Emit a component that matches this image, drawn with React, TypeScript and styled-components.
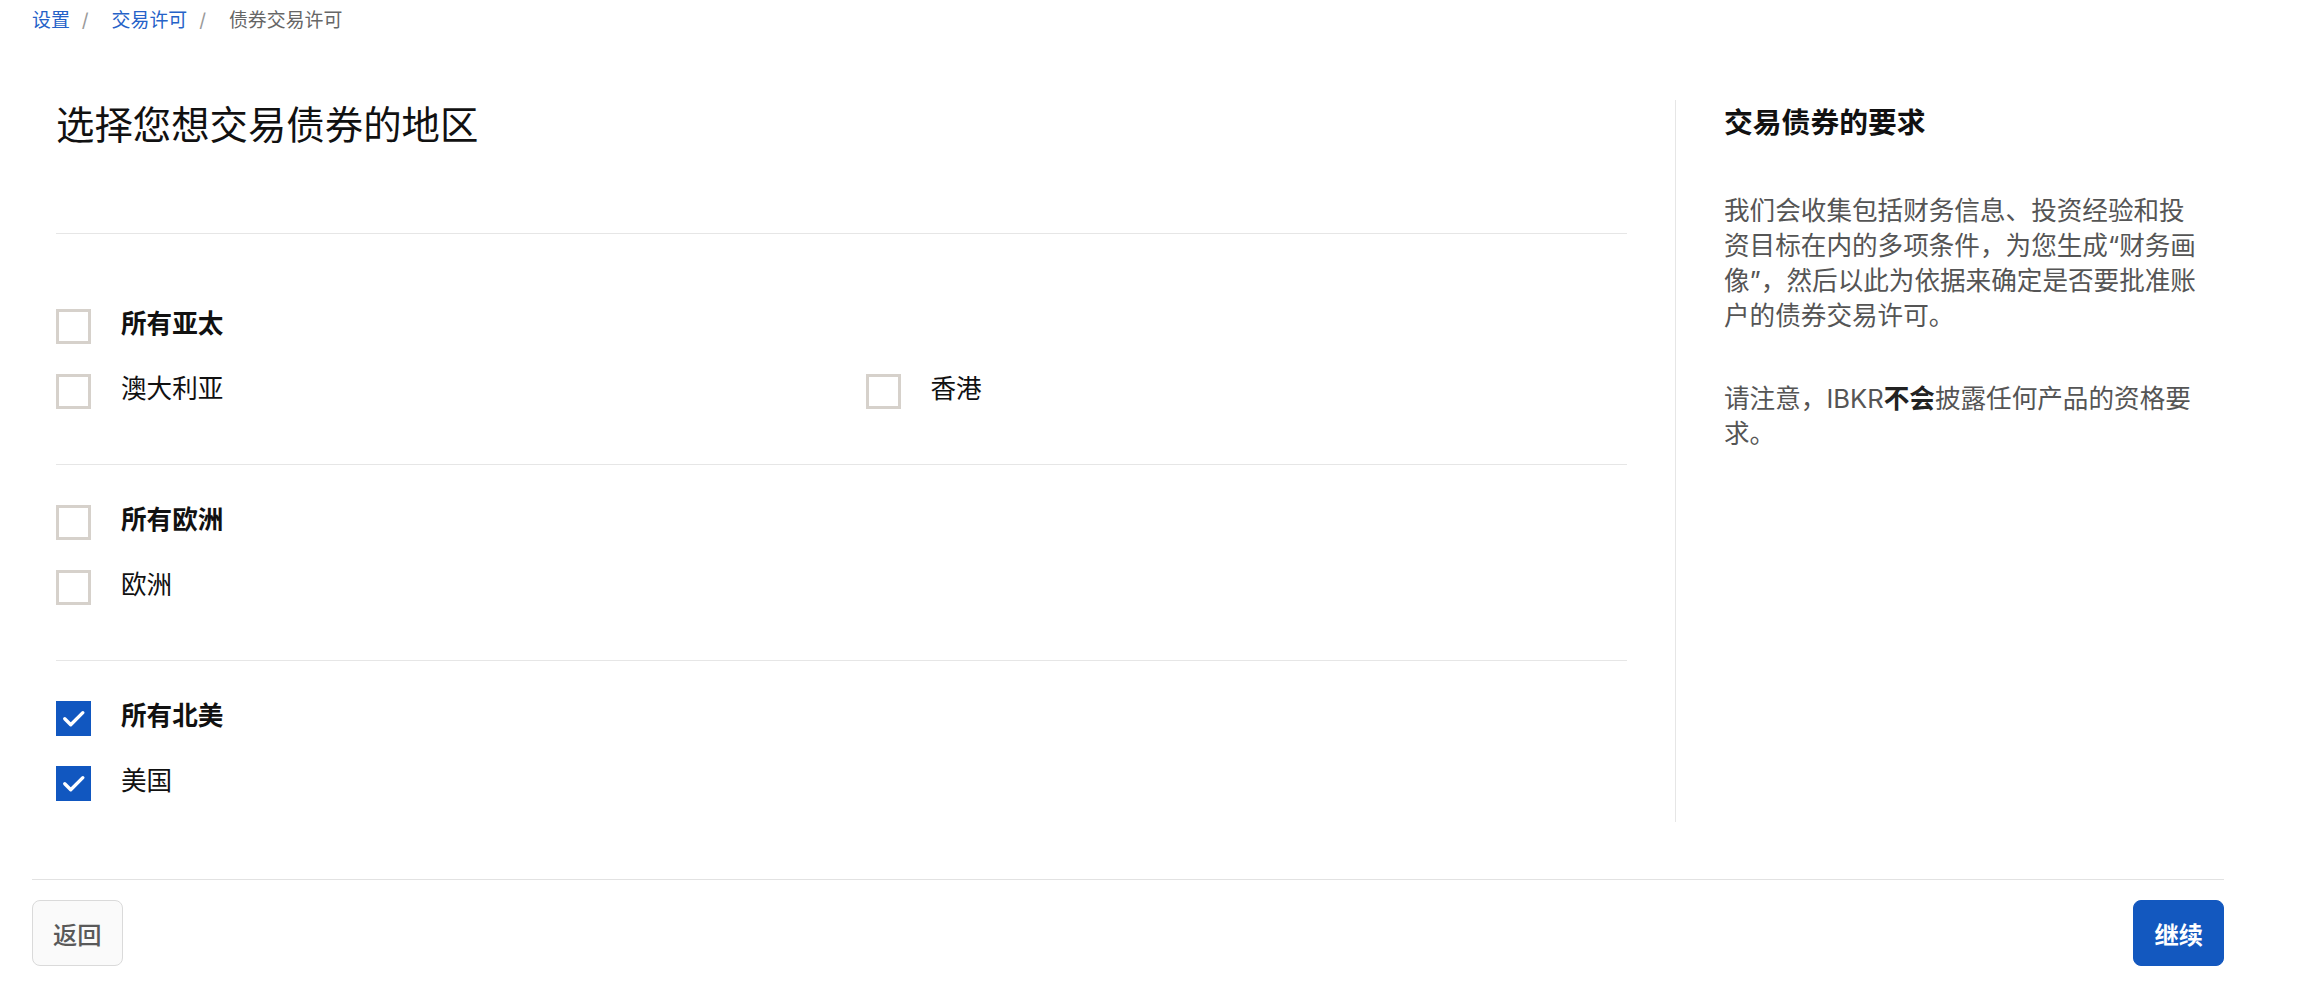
import React, { useState } from 'react';
import styled, { createGlobalStyle } from 'styled-components';

const GlobalStyle = createGlobalStyle`
  body {
    margin: 0;
    background: #fff;
    color: #111;
    font-family: Inter, "Noto Sans CJK SC", sans-serif;
  }
`;

// 地区分组
interface Region {
  label: string;
  checked: boolean;
}

interface RegionGroup {
  all: Region;
  items: Region[];
}

const initialGroups: RegionGroup[] = [
  { all: { label: '所有亚太', checked: false }, items: [{ label: '澳大利亚', checked: false }, { label: '香港', checked: false }] },
  { all: { label: '所有欧洲', checked: false }, items: [{ label: '欧洲', checked: false }] },
  { all: { label: '所有北美', checked: true }, items: [{ label: '美国', checked: true }] },
];

const CheckIcon = () => (
  <svg width="35" height="35" viewBox="0 0 24 24" fill="none">
    <path d="M6 12.2l4.1 4.1L18.4 8" stroke="#fff" strokeWidth="2.3" strokeLinecap="round" strokeLinejoin="round" />
  </svg>
);

const Checkbox: React.FC<{ label: string; checked: boolean; bold?: boolean; onToggle: () => void }> = ({
  label,
  checked,
  bold,
  onToggle,
}) => (
  <Option onClick={onToggle}>
    <Box $checked={checked}>{checked && <CheckIcon />}</Box>
    <Label $bold={bold}>{label}</Label>
  </Option>
);

const App: React.FC = () => {
  const [groups, setGroups] = useState(initialGroups);

  const toggleAll = (gi: number) => {
    setGroups((prev) =>
      prev.map((g, i) => {
        if (i !== gi) return g;
        const next = !g.all.checked;
        return { all: { ...g.all, checked: next }, items: g.items.map((it) => ({ ...it, checked: next })) };
      })
    );
  };

  const toggleItem = (gi: number, ii: number) => {
    setGroups((prev) =>
      prev.map((g, i) => {
        if (i !== gi) return g;
        const items = g.items.map((it, j) => (j === ii ? { ...it, checked: !it.checked } : it));
        return { all: { ...g.all, checked: items.every((it) => it.checked) }, items };
      })
    );
  };

  return (
    <>
      <GlobalStyle />
      <Page>
        <Breadcrumb>
          <Crumb $link>设置</Crumb>
          <Slash>/</Slash>
          <Crumb $link>交易许可</Crumb>
          <Slash>/</Slash>
          <Crumb>债券交易许可</Crumb>
        </Breadcrumb>

        <Body>
          <Main>
            <Header>
              <Title>选择您想交易债券的地区</Title>
            </Header>
            {groups.map((g, gi) => (
              <Group key={g.all.label} $first={gi === 0} $last={gi === groups.length - 1}>
                <Wide>
                  <Checkbox label={g.all.label} checked={g.all.checked} bold onToggle={() => toggleAll(gi)} />
                </Wide>
                {g.items.map((it, ii) => (
                  <Checkbox key={it.label} label={it.label} checked={it.checked} onToggle={() => toggleItem(gi, ii)} />
                ))}
              </Group>
            ))}
          </Main>

          <Aside>
            <AsideTitle>交易债券的要求</AsideTitle>
            <Text>
              我们会收集包括财务信息、投资经验和投资目标在内的多项条件，为您生成“财务画像”，然后以此为依据来确定是否要批准账户的债券交易许可。
            </Text>
            <Text $gap>
              请注意，IBKR<strong>不会</strong>披露任何产品的资格要求。
            </Text>
          </Aside>
        </Body>

        <Footer>
          <Button>返回</Button>
          <Button $primary>继续</Button>
        </Footer>
      </Page>
    </>
  );
};

const Page = styled.div`
  padding: 7px 92px 40px 32px;
`;

const Breadcrumb = styled.nav`
  display: flex;
  align-items: center;
  height: 28px;
  font-size: 18.9px;
  line-height: 28px;
`;

const Crumb = styled.span<{ $link?: boolean }>`
  color: ${(p) => (p.$link ? '#2562c8' : '#666')};
  cursor: ${(p) => (p.$link ? 'pointer' : 'default')};
`;

const Slash = styled.span`
  color: #9a9a9a;
  margin: 0 23px 0 12px;
`;

const Body = styled.div`
  display: flex;
  margin-top: 65px;
`;

const Main = styled.section`
  flex: 1;
  padding: 0 48px 21px 24px;
`;

const Header = styled.div`
  padding-bottom: 83px;
  border-bottom: 1px solid #e6e6e6;
`;

const Title = styled.h1`
  margin: 0;
  font-size: 38.4px;
  line-height: 50px;
  font-weight: 400;
  color: #111;
`;

const Group = styled.div<{ $first?: boolean; $last?: boolean }>`
  display: grid;
  grid-template-columns: 1fr 1fr;
  column-gap: 48px;
  row-gap: 30px;
  padding-top: ${(p) => (p.$first ? '75px' : '40px')};
  padding-bottom: ${(p) => (p.$last ? '0' : '55px')};
  border-bottom: ${(p) => (p.$last ? 'none' : '1px solid #e6e6e6')};
`;

const Wide = styled.div`
  grid-column: 1 / -1;
`;

const Option = styled.label`
  display: flex;
  align-items: center;
  gap: 30px;
  height: 35px;
  cursor: pointer;
`;

const Box = styled.span<{ $checked: boolean }>`
  box-sizing: border-box;
  display: flex;
  align-items: center;
  justify-content: center;
  width: 35px;
  height: 35px;
  flex-shrink: 0;
  background: ${(p) => (p.$checked ? '#1157c0' : '#fff')};
  border: ${(p) => (p.$checked ? 'none' : '3px solid #d6d1cb')};
`;

const Label = styled.span<{ $bold?: boolean }>`
  font-size: 25.6px;
  line-height: 35px;
  font-weight: ${(p) => (p.$bold ? 700 : 400)};
  color: #111;
  margin-top: -6px;
`;

const Aside = styled.aside`
  width: 474px;
  flex-shrink: 0;
  padding: 4px 26px 0 48px;
  border-left: 1px solid #e6e6e6;
`;

const AsideTitle = styled.h2`
  margin: 0;
  font-size: 28.8px;
  line-height: 38px;
  font-weight: 700;
  color: #111;
`;

const Text = styled.p<{ $gap?: boolean }>`
  margin: ${(p) => (p.$gap ? '48px' : '51px')} 0 0;
  font-size: 25.6px;
  line-height: 35px;
  color: #555;

  strong {
    color: #222;
    font-weight: 700;
  }
`;

const Footer = styled.div`
  display: flex;
  justify-content: space-between;
  align-items: center;
  margin-top: 57px;
  padding-top: 20px;
  border-top: 1px solid #e2e2e2;
`;

const Button = styled.button<{ $primary?: boolean }>`
  height: 66px;
  padding: 0 20px;
  border-radius: 8px;
  font-family: inherit;
  font-size: 24.3px;
  font-weight: ${(p) => (p.$primary ? 700 : 500)};
  cursor: pointer;
  color: ${(p) => (p.$primary ? '#fff' : '#595959')};
  background: ${(p) => (p.$primary ? '#1358bf' : '#fafafa')};
  border: 1px solid ${(p) => (p.$primary ? '#1358bf' : '#dadada')};
`;

export default App;
